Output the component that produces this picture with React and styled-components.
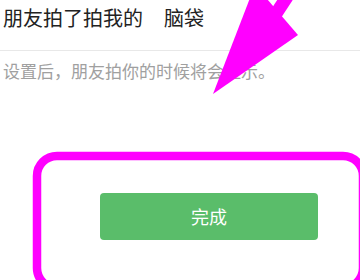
import React from "react";
import styled, { createGlobalStyle } from "styled-components";

const GlobalStyle = createGlobalStyle`
  html, body {
    margin: 0;
    padding: 0;
    background: #ffffff;
  }
  body {
    font-family: "Noto Sans CJK SC", "Noto Sans", sans-serif;
  }
`;

const Screen = styled.div`
  position: relative;
  width: 360px;
  height: 280px;
  overflow: hidden;
  background: #ffffff;
`;

const Header = styled.div`
  height: 44px;
  padding: 6px 0 0 3px;
  border-bottom: 1px solid #e8e8e8;
  font-size: 20px;
  line-height: 24px;
  color: #222222;
`;

const Word = styled.span`
  margin-left: ${(p) => p.gap || 0}px;
`;

const Hint = styled.p`
  margin: 9px 0 0 3px;
  font-size: 17px;
  line-height: 22px;
  color: #a0a0a0;
`;

const Footer = styled.div`
  display: flex;
  padding: 111px 0 0 100px;
`;

const DoneButton = styled.button`
  width: 218px;
  height: 47px;
  border: none;
  border-radius: 4px;
  background: #5abd6a;
  color: #ffffff;
  font-family: inherit;
  font-size: 18px;
  line-height: 47px;
  padding: 0;
  cursor: pointer;
`;

const Markup = styled.svg`
  position: absolute;
  left: 0;
  top: 0;
  pointer-events: none;
`;

export default function App() {
  return (
    <Screen>
      <GlobalStyle />
      <Header>
        朋友拍了拍我的<Word gap={21}>脑袋</Word>
      </Header>
      <Hint>设置后，朋友拍你的时候将会显示。</Hint>
      <Footer>
        <DoneButton>完成</DoneButton>
      </Footer>

      {/* hand-drawn annotation layer */}
      <Markup width="360" height="280" viewBox="0 0 360 280">
        <line x1="298" y1="-20" x2="268" y2="26" stroke="#ff00ff" strokeWidth="13" />
        <polygon points="213,94 255,-15 298,35" fill="#ff00ff" />
        <rect x="37" y="156" width="326" height="132" rx="20" fill="none" stroke="#ff00ff" strokeWidth="8.5" />
      </Markup>
    </Screen>
  );
}
